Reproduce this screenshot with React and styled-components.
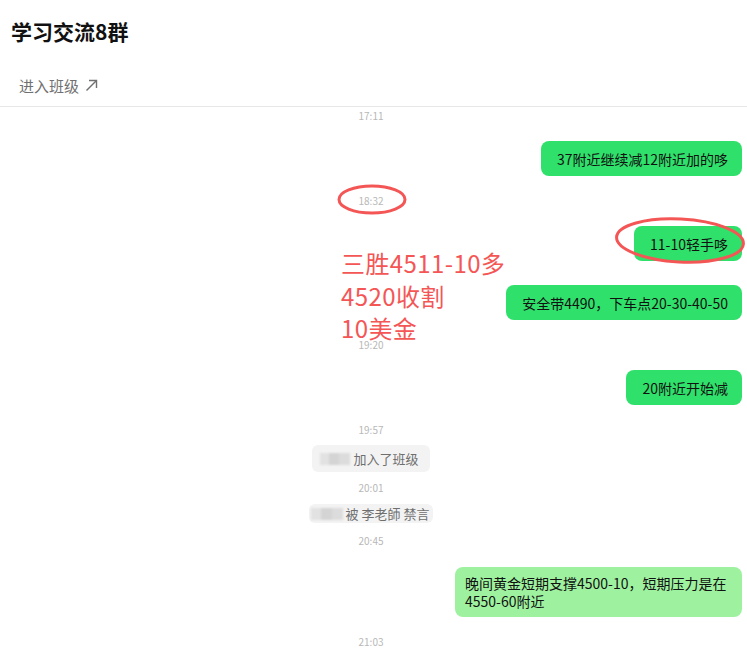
import React from 'react';
import styled, { createGlobalStyle } from 'styled-components';

const GlobalStyle = createGlobalStyle`
  html, body {
    margin: 0;
    padding: 0;
    background: #fff;
  }
  body {
    font-family: "Noto Sans CJK SC", "Noto Sans", sans-serif;
    color: #1a1a1a;
  }
`;

const Page = styled.div`
  position: relative;
  width: 747px;
  height: 648px;
  overflow: hidden;
`;

const Header = styled.header`
  border-bottom: 1px solid #e8e8e8;
`;

const Title = styled.h1`
  margin: 0;
  padding: 17px 0 0 11px;
  height: 47px;
  font-size: 21px;
  line-height: 28px;
  font-weight: 700;
  color: #111;
`;

const EnterLink = styled.a`
  display: flex;
  align-items: center;
  gap: 6px;
  height: 42px;
  padding-left: 19px;
  font-size: 15px;
  color: #707070;
  text-decoration: none;
  cursor: pointer;
`;

const Feed = styled.main`
  display: flex;
  flex-direction: column;
  gap: 18px;
  padding: 2px 5px 0 0;
`;

const Notices = styled.div`
  display: flex;
  flex-direction: column;
  align-items: center;
  gap: 9px;
  margin-bottom: 1px;
`;

const Time = styled.div`
  text-align: center;
  font-size: 10px;
  line-height: 14px;
  height: 14px;
  color: #b8b8b8;
`;

const Row = styled.div`
  display: flex;
  justify-content: flex-end;
  margin-top: ${(p) => (p.$follow ? '6px' : '0')};
`;

const Bubble = styled.div`
  display: flex;
  align-items: center;
  min-height: 35px;
  box-sizing: border-box;
  max-width: 287px;
  padding: ${(p) => (p.$multi ? '7px 10px' : '5px 14px 5px 16px')};
  border-radius: 8px;
  background: ${(p) => (p.$light ? '#9ef29f' : '#2fe06b')};
  font-size: 14px;
  line-height: 18px;
  color: #111;
`;

const Notice = styled.div`
  display: flex;
  align-items: center;
  gap: 3px;
  box-sizing: border-box;
  padding: ${(p) => (p.$slim ? '0 4px 0 2px' : '0 11px 0 8px')};
  height: ${(p) => (p.$slim ? '19px' : '27px')};
  margin-top: ${(p) => (p.$slim ? '0' : '-1px')};
  margin-bottom: ${(p) => (p.$slim ? '2px' : '0')};
  border-radius: 6px;
  background: #f3f3f3;
  font-size: 13px;
  color: #6f6f6f;
`;

const HiddenName = styled.span`
  display: inline-block;
  width: ${(p) => p.$w}px;
  height: 12px;
  background: linear-gradient(90deg, #e2e2e2 0 30%, #d4d4d4 30% 65%, #dcdcdc 65%);
  filter: blur(1.2px);
`;

const Marks = styled.svg`
  position: absolute;
  left: 0;
  top: 0;
  pointer-events: none;
`;

const Scrawl = styled.div`
  position: absolute;
  left: 341px;
  top: 247px;
  font-size: 24px;
  line-height: 32.5px;
  letter-spacing: 0.4px;
  color: #f45656;
  pointer-events: none;
`;

function ArrowUpRight() {
  return (
    <svg width="13" height="13" viewBox="0 0 13 13" fill="none" stroke="#707070" strokeWidth="1.4">
      <path d="M1.5 11.5 L11.5 1.5" />
      <path d="M4 1.5 H11.5 V9" />
    </svg>
  );
}

export default function App() {
  return (
    <Page>
      <GlobalStyle />
      <Header>
        <Title>学习交流8群</Title>
        <EnterLink>
          进入班级
          <ArrowUpRight />
        </EnterLink>
      </Header>

      <Feed>
        <Time>17:11</Time>
        <Row><Bubble>37附近继续减12附近加的哆</Bubble></Row>
        <Time>18:32</Time>
        <Row><Bubble>11-10轻手哆</Bubble></Row>
        <Row $follow><Bubble>安全带4490，下车点20-30-40-50</Bubble></Row>
        <Time>19:20</Time>
        <Row><Bubble>20附近开始减</Bubble></Row>
        <Notices>
          <Time>19:57</Time>
          <Notice>
            <HiddenName $w={30} />
            加入了班级
          </Notice>
          <Time>20:01</Time>
          <Notice $slim>
            <HiddenName $w={32} />
            被 李老師 禁言
          </Notice>
          <Time>20:45</Time>
        </Notices>
        <Row>
          <Bubble $light $multi>晚间黄金短期支撑4500-10，短期压力是在4550-60附近</Bubble>
        </Row>
        <Time>21:03</Time>
      </Feed>

      <Marks width="747" height="648">
        <ellipse cx="372" cy="199.5" rx="33" ry="13.5" fill="none" stroke="#f45656" strokeWidth="3" />
        <ellipse cx="680" cy="240.5" rx="63.5" ry="21.5" fill="none" stroke="#f45656" strokeWidth="3" transform="rotate(3 680 240.5)" />
      </Marks>

      <Scrawl>
        三胜4511-10多<br />
        4520收割<br />
        10美金
      </Scrawl>
    </Page>
  );
}
